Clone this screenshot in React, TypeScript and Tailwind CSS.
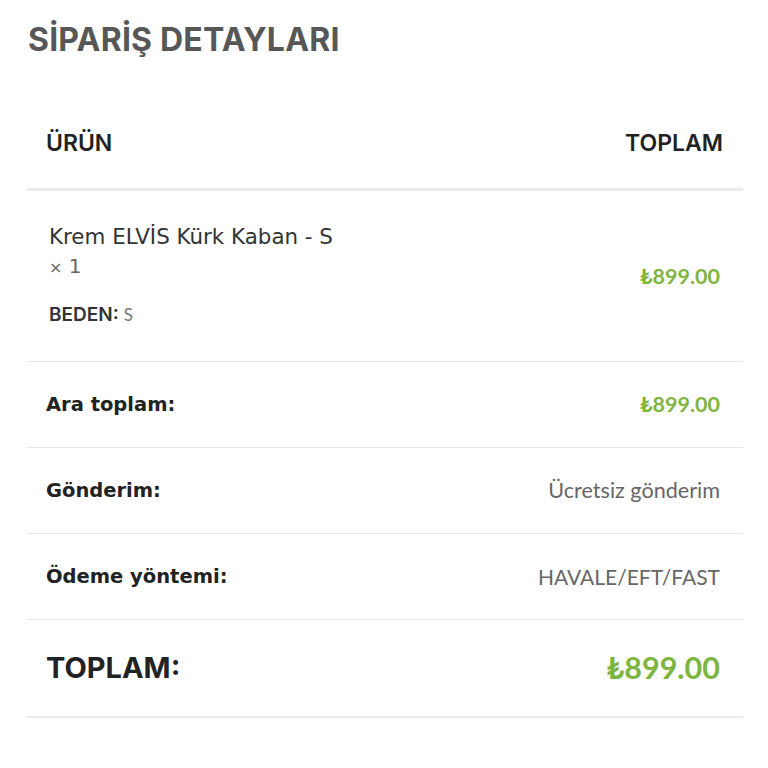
export default function App() {
  const rows = [
    { label: 'Ara toplam:', value: '₺899.00', kind: 'price' },
    { label: 'Gönderim:', value: 'Ücretsiz gönderim', kind: 'text' },
    { label: 'Ödeme yöntemi:', value: 'HAVALE/EFT/FAST', kind: 'caps' },
  ]

  return (
    <div className="min-h-screen bg-white px-[27px] pt-[20px] font-['Inter',sans-serif]">
      {/* Title */}
      <h2 className="pl-[1px] text-[32px] font-bold leading-[40px] tracking-[0.2px] text-[#575757]">
        SİPARİŞ DETAYLARI
      </h2>

      <div className="mt-[71px] w-[716px]">
        {/* Header */}
        <div className="flex h-[60px] items-start justify-between border-b-[3px] border-[#ececec] pl-[19px] pr-[20px]">
          <span className="text-[23px] font-semibold leading-[24px] text-[#222222]">ÜRÜN</span>
          <span className="text-[23px] font-semibold leading-[24px] text-[#222222]">TOPLAM</span>
        </div>

        {/* Product */}
        <div className="flex h-[171px] items-center justify-between border-b border-[#e6e6e6] pl-[22px] pr-[23px]">
          <div className="flex flex-col">
            <span className="font-['DejaVu_Sans',sans-serif] text-[21.4px] leading-[30px] text-[#333333]">
              Krem ELVİS Kürk Kaban - S
            </span>
            <span className="font-['DejaVu_Sans',sans-serif] text-[20px] leading-[28px] text-[#666666]">
              <span className="text-[16px]">×</span> 1
            </span>
            <div className="mt-[18px] flex items-baseline gap-[5px] leading-[30px]">
              <span className="text-[19px] font-semibold text-[#333333]">BEDEN:</span>
              <span className="font-['Lato',sans-serif] text-[17px] text-[#777777]">S</span>
            </div>
          </div>
          <span className="font-['Lato',sans-serif] text-[21.5px] font-bold text-[#7db53f]">₺899.00</span>
        </div>

        {rows.map((row) => (
          <div
            key={row.label}
            className="flex h-[86px] items-center justify-between border-b border-[#e6e6e6] pl-[19px] pr-[23px]"
          >
            <span className="font-['DejaVu_Sans',sans-serif] text-[19.5px] font-bold text-[#222222]">
              {row.label}
            </span>
            {row.kind === 'price' && (
              <span className="font-['Lato',sans-serif] text-[21.5px] font-bold text-[#7db53f]">{row.value}</span>
            )}
            {row.kind === 'text' && (
              <span className="font-['Lato',sans-serif] text-[21.6px] text-[#666666]">{row.value}</span>
            )}
            {row.kind === 'caps' && (
              <span className="font-['Lato',sans-serif] text-[21px] text-[#666666]">{row.value}</span>
            )}
          </div>
        ))}

        {/* Total */}
        <div className="flex h-[98px] items-center justify-between border-b-2 border-[#ececec] pl-[19px] pr-[23px]">
          <span className="text-[29px] font-bold text-[#222222]">TOPLAM:</span>
          <span className="font-['Lato',sans-serif] text-[30.5px] font-bold text-[#7db53f]">₺899.00</span>
        </div>
      </div>
    </div>
  )
}
